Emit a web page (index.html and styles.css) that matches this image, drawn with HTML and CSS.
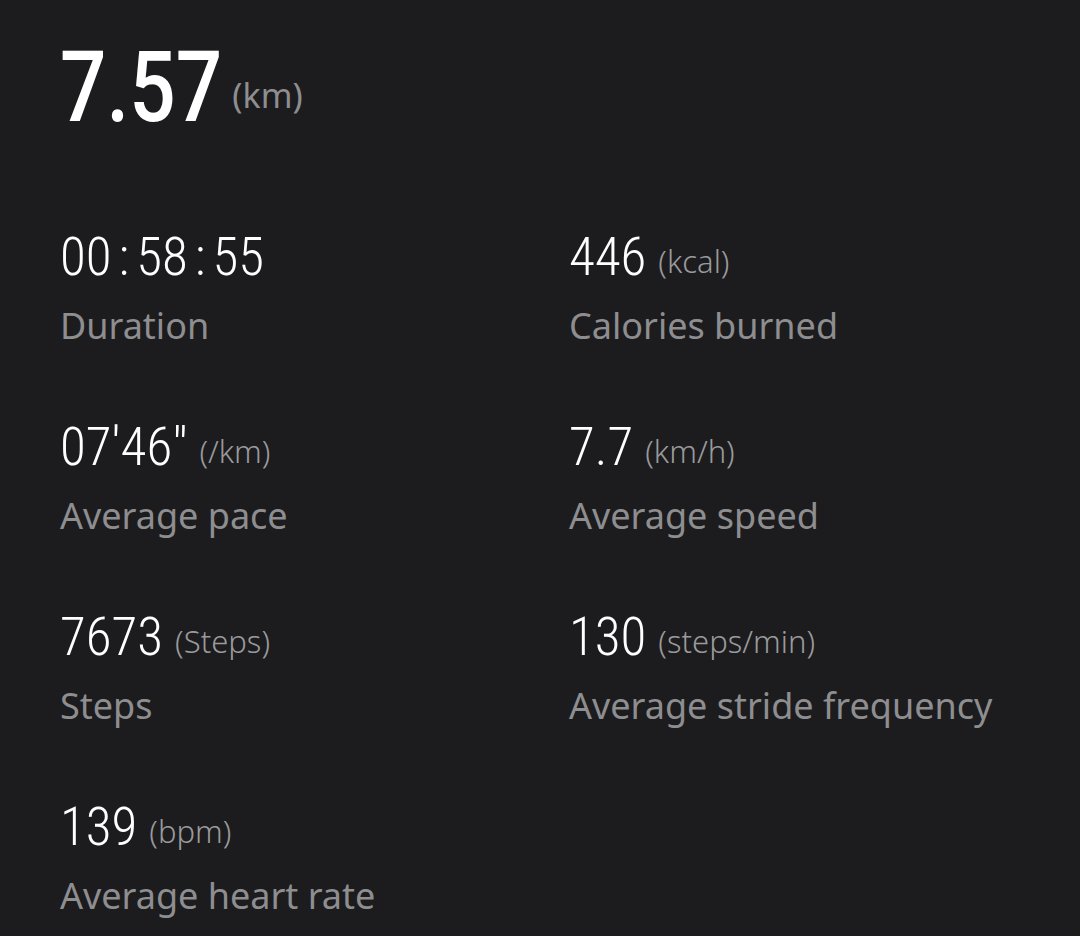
FILE: index.html
```html
<!DOCTYPE html>
<html lang="en">
<head>
<meta charset="utf-8">
<title>Workout summary</title>
<link rel="stylesheet" href="styles.css">
</head>
<body>
<main class="summary">
  <header class="total">
    <span class="total-value">7.57</span><span class="total-unit">(km)</span>
  </header>
  <section class="stats">
    <div class="stat">
      <div class="stat-value">00<span class="sep">:</span>58<span class="sep">:</span>55</div>
      <div class="stat-label">Duration</div>
    </div>
    <div class="stat">
      <div class="stat-value">446<span class="unit">(kcal)</span></div>
      <div class="stat-label">Calories burned</div>
    </div>
    <div class="stat">
      <div class="stat-value">07'46"<span class="unit">(/km)</span></div>
      <div class="stat-label">Average pace</div>
    </div>
    <div class="stat">
      <div class="stat-value">7.7<span class="unit">(km/h)</span></div>
      <div class="stat-label">Average speed</div>
    </div>
    <div class="stat">
      <div class="stat-value">7673<span class="unit">(Steps)</span></div>
      <div class="stat-label">Steps</div>
    </div>
    <div class="stat">
      <div class="stat-value">130<span class="unit">(steps/min)</span></div>
      <div class="stat-label">Average stride frequency</div>
    </div>
    <div class="stat">
      <div class="stat-value">139<span class="unit">(bpm)</span></div>
      <div class="stat-label">Average heart rate</div>
    </div>
  </section>
</main>
</body>
</html>
```
FILE: styles.css
```css
html, body {
  margin: 0;
  padding: 0;
  background: #1c1c1e;
}

body {
  width: 1080px;
  height: 936px;
  overflow: hidden;
  font-family: "Noto Sans", "DejaVu Sans", sans-serif;
}

.summary {
  padding: 38px 0 0 60px;
}

.total {
  height: 100px;
  line-height: 100px;
  white-space: nowrap;
}

.total-value {
  display: inline-block;
  font-family: Roboto, "Liberation Sans", sans-serif;
  font-weight: 500;
  font-size: 98.5px;
  color: #ffffff;
  transform: scaleX(0.83);
  transform-origin: 0 50%;
  margin-right: -23px;
}

.total-unit {
  font-family: "Noto Sans", sans-serif;
  font-size: 34px;
  color: #8e8e90;
  vertical-align: 13px;
  line-height: 1;
}

.stats {
  margin-top: 89px;
  display: grid;
  grid-template-columns: 509px 1fr;
  row-gap: 69px;
}

.stat {
  display: flex;
  flex-direction: column;
  gap: 17px;
}

.stat-value {
  height: 60px;
  line-height: 60px;
  font-family: "Liberation Sans Narrow", "Roboto Condensed", Roboto, sans-serif;
  font-weight: 300;
  font-size: 53px;
  color: #ffffff;
  white-space: nowrap;
}

.sep {
  margin: 0 7px;
}

.unit {
  font-family: "Noto Sans", sans-serif;
  font-size: 31px;
  color: #9a9a9c;
  margin-left: 12px;
  vertical-align: 2px;
  line-height: 1;
}

.stat-label {
  height: 44px;
  line-height: 44px;
  font-size: 36px;
  color: #8e8e90;
  white-space: nowrap;
}
```
